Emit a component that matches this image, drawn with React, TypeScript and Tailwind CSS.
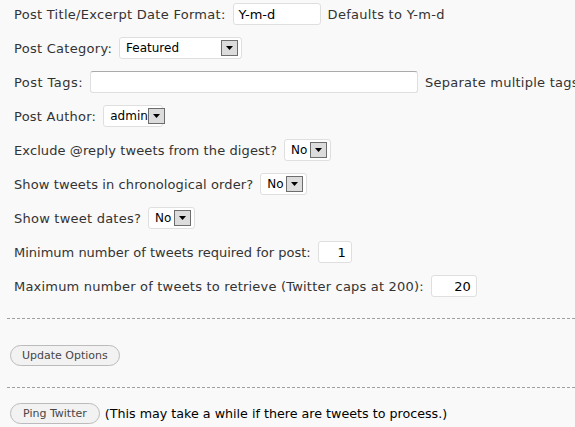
import React from 'react';

const font = { fontFamily: '"DejaVu Sans", Verdana, sans-serif' };

function Arrow() {
  return (
    <span className="flex h-[16px] w-[17px] shrink-0 items-center justify-center border border-[#6d6d6d] bg-[#dcdcdc]">
      <svg width="7" height="4" viewBox="0 0 7 4">
        <path d="M0 0h7L3.5 4z" fill="#000" />
      </svg>
    </span>
  );
}

function Select({ value, width }: { value: string; width: string }) {
  return (
    <span
      className={`flex h-[22px] ${width} shrink-0 items-center justify-between rounded-[3px] border border-[#dfdfdf] bg-white pl-[6px] pr-[3px] text-[12px] tracking-normal text-black`}
    >
      <span className="leading-none">{value}</span>
      <Arrow />
    </span>
  );
}

function Input({ value = '', width, right = false }: { value?: string; width: string; right?: boolean }) {
  return (
    <span
      className={`flex h-[22px] ${width} shrink-0 items-center rounded-[3px] border border-[#dfdfdf] bg-white px-[5px] text-[13px] tracking-normal text-black ${
        right ? 'justify-end' : ''
      }`}
    >
      {value}
    </span>
  );
}

function Row({ tracking, children }: { tracking: string; children: React.ReactNode }) {
  return (
    <div className={`flex h-[34px] items-start gap-[7px] whitespace-nowrap pt-[3px] pl-[14px] leading-[23px] ${tracking}`}>
      {children}
    </div>
  );
}

export default function App() {
  return (
    <div className="h-[427px] w-[575px] overflow-hidden bg-[#f9f9f9] text-[13px] text-[#333]" style={font}>
      <Row tracking="tracking-[0.29px]">
        <span>Post Title/Excerpt Date Format:</span>
        <Input value="Y-m-d" width="w-[88px]" />
        <span>Defaults to Y-m-d</span>
      </Row>
      <Row tracking="tracking-[0.28px]">
        <span>Post Category:</span>
        <Select value="Featured" width="w-[123px]" />
      </Row>
      <Row tracking="tracking-[0.45px]">
        <span>Post Tags:</span>
        <span className="h-[22px] w-[328px] shrink-0 rounded-[3px] border border-[#dfdfdf] border-t-[#aaa] bg-white" />
        <span className="tracking-[0.25px]">Separate multiple tags</span>
      </Row>
      <Row tracking="tracking-[0.25px]">
        <span>Post Author:</span>
        <Select value="admin" width="w-[60px]" />
      </Row>
      <Row tracking="tracking-[0.1px]">
        <span>Exclude @reply tweets from the digest?</span>
        <Select value="No" width="w-[47px]" />
      </Row>
      <Row tracking="tracking-[0.11px]">
        <span>Show tweets in chronological order?</span>
        <Select value="No" width="w-[47px]" />
      </Row>
      <Row tracking="tracking-[0.23px]">
        <span>Show tweet dates?</span>
        <Select value="No" width="w-[47px]" />
      </Row>
      <Row tracking="tracking-normal">
        <span>Minimum number of tweets required for post:</span>
        <Input value="1" width="w-[34px]" right />
      </Row>
      <Row tracking="tracking-[0.2px]">
        <span>Maximum number of tweets to retrieve (Twitter caps at 200):</span>
        <Input value="20" width="w-[46px]" right />
      </Row>

      <div className="mt-[12px] ml-[7px] border-t border-dashed border-[#a0a0a0]" />

      <div className="pt-[26px] pl-[10px]">
        <button className="h-[21px] rounded-full border border-[#bbb] bg-[#f2f2f2] px-[11px] text-[11px] leading-none text-[#464646]">
          Update Options
        </button>
      </div>

      <div className="mt-[21px] ml-[7px] border-t border-dashed border-[#a0a0a0]" />

      <div className="flex items-center gap-[5px] pt-[15px] pl-[10px]">
        <button className="h-[21px] rounded-full border border-[#bbb] bg-[#f2f2f2] px-[12px] text-[11px] leading-none text-[#464646]">
          Ping Twitter
        </button>
        <span className="text-[12.7px] text-black">(This may take a while if there are tweets to process.)</span>
      </div>
    </div>
  );
}
